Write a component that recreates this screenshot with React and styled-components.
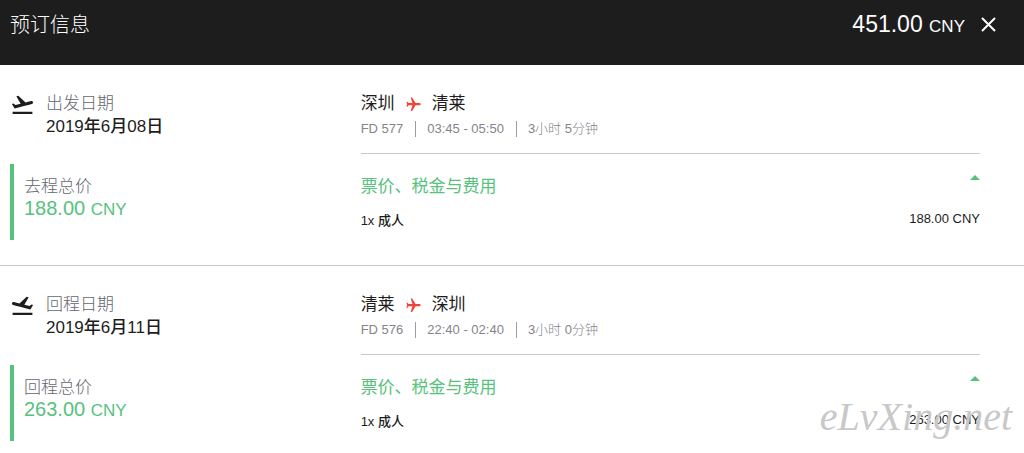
import React, { Fragment, useState } from "react";
import styled, { createGlobalStyle } from "styled-components";
import { MdFlight, MdFlightTakeoff } from "react-icons/md";

const GlobalStyle = createGlobalStyle`
  * {
    box-sizing: border-box;
  }
  body {
    margin: 0;
    background: #fff;
    color: #1d1d1d;
    font-family: "Liberation Sans", Arial, "Noto Sans CJK SC", sans-serif;
    font-size: 17px;
    line-height: 24px;
  }
  h1, h2, p {
    margin: 0;
    font-weight: 400;
  }
  button {
    padding: 0;
    border: 0;
    background: none;
    color: inherit;
    font: inherit;
    cursor: pointer;
  }
`;

const Header = styled.header`
  display: flex;
  justify-content: space-between;
  align-items: flex-start;
  padding: 8px 28px 23px 10px;
  background: #1d1d1d;
  color: #fff;
`;

const Title = styled.h1`
  font-size: 20px;
  font-weight: 300;
  line-height: 34px;
`;

const Total = styled.div`
  display: flex;
  align-items: center;
  gap: 16px;
`;

const Price = styled.p`
  font-size: ${({ $size }) => $size}px;
  line-height: ${({ $line }) => $line}px;
  color: ${({ $color }) => $color || "inherit"};

  small {
    font-size: 17px;
    line-height: 1;
  }
`;

const CloseButton = styled.button`
  display: flex;
  align-items: center;
  height: 30px;
`;

const Flight = styled.section`
  display: grid;
  grid-template-columns: 36.8% 1fr;
  padding: 27px 44px 25px 0;
  border-bottom: 1px solid #c8c8c8;

  &:last-of-type {
    border-bottom: 0;
    padding-bottom: 0;
  }
`;

const Summary = styled.div`
  padding-left: 10px;
`;

const DateRow = styled.div`
  display: flex;
  gap: 11px;
  height: 72px;
`;

const LegIcon = styled(MdFlightTakeoff)`
  transform: ${({ $back }) => ($back ? "scaleX(-1)" : "none")};
`;

const Label = styled.p`
  font-weight: 300;
  color: #66666e;
`;

const DateText = styled.p`
  font-weight: 500;
  line-height: 22px;
`;

const LegTotal = styled.div`
  height: 76px;
  padding: 11px 0 0 10px;
  border-left: 4px solid #57c27c;
`;

const Route = styled.h2`
  display: flex;
  align-items: center;
  gap: 10px;
  font-size: 17px;
  line-height: 24px;
`;

const Plane = styled(MdFlight)`
  color: #f0443a;
  transform: rotate(90deg);
`;

const Details = styled.div`
  display: flex;
  align-items: center;
  height: 38px;
  padding-bottom: 12px;
  border-bottom: 1px solid #c8c8c8;
  color: #84848c;
  font-size: 13px;
  font-weight: 300;
  line-height: 16px;

  span + span {
    margin-left: 12px;
    padding-left: 11px;
    border-left: 1px solid #9c9ca2;
  }
`;

const FareToggle = styled.button`
  display: flex;
  justify-content: space-between;
  width: 100%;
  margin-top: 21px;
  text-align: left;
`;

const FareTitle = styled.span`
  color: #57c27c;
`;

const Arrow = styled.svg`
  fill: #57c27c;
  transform: rotate(${({ $open }) => ($open ? 0 : 180)}deg);
`;

const FareRow = styled.div`
  display: flex;
  justify-content: space-between;
  padding-top: 10px;
  font-size: 13px;
  line-height: 20px;
`;

const Passenger = styled.span`
  padding-top: 2px;
  font-weight: 500;
`;

const Watermark = styled.div`
  position: absolute;
  right: 12px;
  top: 397px;
  color: #c8c8c8;
  font-family: "Liberation Serif", serif;
  font-size: 40px;
  font-style: italic;
  line-height: 40px;
  pointer-events: none;
`;

const flights = [
  {
    dateLabel: "出发日期",
    date: "2019年6月08日",
    totalLabel: "去程总价",
    price: "188.00",
    from: "深圳",
    to: "清莱",
    number: "FD 577",
    time: "03:45 - 05:50",
    duration: "3小时 5分钟",
  },
  {
    back: true,
    dateLabel: "回程日期",
    date: "2019年6月11日",
    totalLabel: "回程总价",
    price: "263.00",
    from: "清莱",
    to: "深圳",
    number: "FD 576",
    time: "22:40 - 02:40",
    duration: "3小时 0分钟",
  },
];

function FlightInfo({ info }) {
  const [open, setOpen] = useState(true);

  return (
    <Flight>
      <Summary>
        <DateRow>
          <LegIcon size={25} $back={info.back} />
          <div>
            <Label>{info.dateLabel}</Label>
            <DateText>{info.date}</DateText>
          </div>
        </DateRow>
        <LegTotal>
          <Label>{info.totalLabel}</Label>
          <Price $size={20} $line={18} $color="#57c27c">
            {info.price} <small>CNY</small>
          </Price>
        </LegTotal>
      </Summary>
      <div>
        <Route>
          {info.from}
          <Plane size={17} />
          {info.to}
        </Route>
        <Details>
          <span>{info.number}</span>
          <span>{info.time}</span>
          <span>{info.duration}</span>
        </Details>
        <FareToggle type="button" aria-expanded={open} onClick={() => setOpen(!open)}>
          <FareTitle>票价、税金与费用</FareTitle>
          <Arrow $open={open} width="10" height="5" viewBox="0 0 10 5">
            <path d="M0 5L5 0L10 5Z" />
          </Arrow>
        </FareToggle>
        {open && (
          <FareRow>
            <Passenger>1x 成人</Passenger>
            <span>{info.price} CNY</span>
          </FareRow>
        )}
      </div>
    </Flight>
  );
}

function App() {
  return (
    <Fragment>
      <GlobalStyle />
      <Header>
        <Title>预订信息</Title>
        <Total>
          <Price $size={23} $line={32}>
            451.00 <small>CNY</small>
          </Price>
          <CloseButton type="button" aria-label="关闭">
            <svg width="15" height="15" viewBox="0 0 15 15" stroke="#fff" strokeWidth="2">
              <path d="M1 1L14 14M14 1L1 14" />
            </svg>
          </CloseButton>
        </Total>
      </Header>
      <main>
        {flights.map((info) => (
          <FlightInfo key={info.number} info={info} />
        ))}
      </main>
      <Watermark>eLvXing.net</Watermark>
    </Fragment>
  );
}

export default App;
